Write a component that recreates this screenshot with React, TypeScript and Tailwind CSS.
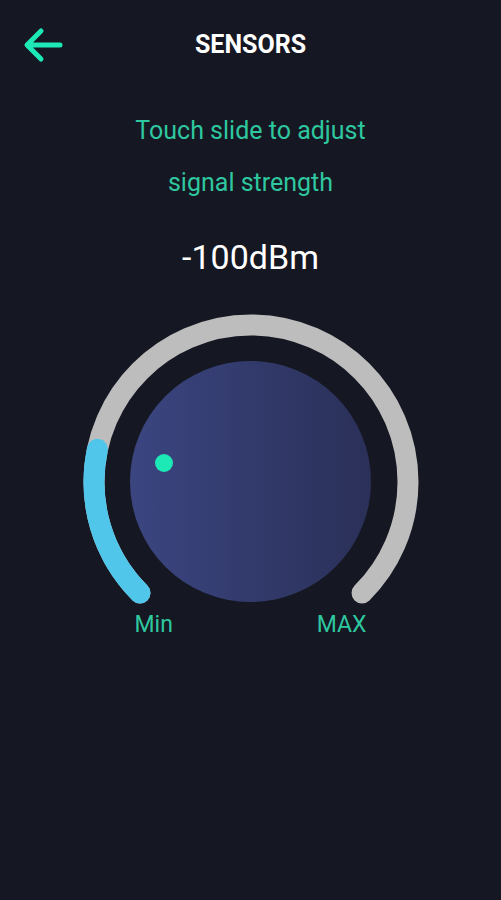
import React from "react";

const CX = 170;
const CY = 169;
const R = 157;

const pt = (deg: number) => {
  const a = (deg * Math.PI) / 180;
  return `${(CX + R * Math.cos(a)).toFixed(2)} ${(CY + R * Math.sin(a)).toFixed(2)}`;
};

const arc = (from: number, to: number) =>
  `M ${pt(from)} A ${R} ${R} 0 ${to - from > 180 ? 1 : 0} 1 ${pt(to)}`;

const Gauge = () => (
  <div className="relative w-[340px] h-[300px]">
    <svg width="340" height="300" viewBox="0 0 340 300" className="absolute inset-0">
      <path d={arc(135, 405)} fill="none" stroke="#bdbdbd" strokeWidth="21" strokeLinecap="round" />
      <path d={arc(135, 192)} fill="none" stroke="#4fc6ea" strokeWidth="21" strokeLinecap="round" />
    </svg>
    <div className="absolute left-[49px] top-[48px] w-[241px] h-[241px] rounded-full bg-[linear-gradient(to_right,#3b4580,#2a3058)]">
      <div className="absolute left-[25px] top-[93px] w-[18px] h-[18px] rounded-full bg-[#1de9b6]" />
    </div>
  </div>
);

export default function App() {
  return (
    <div className="w-[501px] h-[900px] bg-[#151722] flex flex-col items-center font-['Roboto',sans-serif]">
      <header className="w-full h-[90px] flex items-center px-[22px]">
        <svg width="42" height="38" viewBox="0 0 42 38" className="shrink-0">
          <path d="M38 19 H6 M19 5 L5 19 L19 33" fill="none" stroke="#1de9b6" strokeWidth="5" strokeLinecap="round" strokeLinejoin="round" />
        </svg>
        <h1 className="flex-1 text-center text-white font-bold text-[25px]">SENSORS</h1>
        <div className="w-[42px] shrink-0" />
      </header>

      <p className="mt-[15px] text-center text-[25px] leading-[52px] text-[#2ec79f]">
        Touch slide to adjust
        <br />
        signal strength
      </p>

      <div className="mt-[28px] text-white text-[34px] leading-[40px]">-100dBm</div>

      <div className="mt-[36px]">
        <Gauge />
      </div>

      <div className="w-[340px] flex justify-between px-[54px] text-[23px] leading-[24px] text-[#2ec79f]">
        <span>Min</span>
        <span>MAX</span>
      </div>
    </div>
  );
}
